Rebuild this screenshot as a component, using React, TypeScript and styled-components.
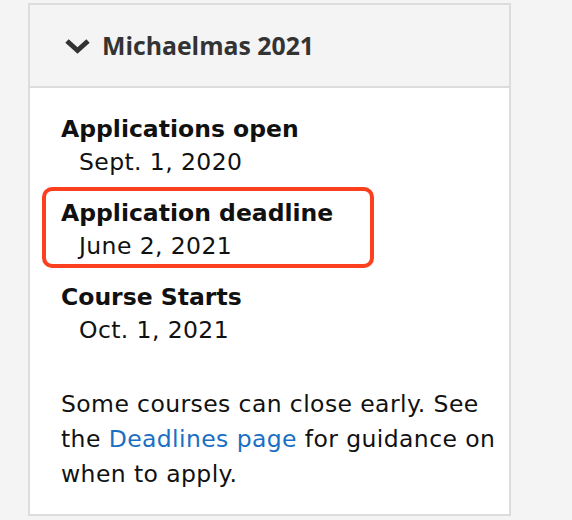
import React from "react"
import styled, { createGlobalStyle } from "styled-components"

const GlobalStyle = createGlobalStyle`
  body {
    margin: 0;
    background: #f4f4f4;
  }
`

const Page = styled.div`
  padding: 3px 0 0 28px;
`

const Card = styled.section`
  width: 479px;
  border: 2px solid #dcdcdc;
  background: #fff;
`

const Header = styled.div`
  height: 81px;
  display: flex;
  align-items: center;
  gap: 11px;
  padding-left: 34px;
  background: #f4f4f4;
  border-bottom: 2px solid #dcdcdc;
`

const Title = styled.h2`
  margin: 0 0 2px;
  font-family: "Open Sans", sans-serif;
  font-weight: 700;
  font-size: 24.8px;
  color: #333;
`

const Body = styled.div`
  padding: 25px 10px 22px 31px;
  font-family: "DejaVu Sans", Verdana, sans-serif;
  font-size: 23.5px;
  letter-spacing: 0.4px;
  color: #111;
`

const Dates = styled.dl`
  margin: 0 0 40px;
`

const Group = styled.div<{ $highlight?: boolean }>`
  position: relative;
  margin-bottom: 18px;
  &:last-child {
    margin-bottom: 0;
  }
  ${(p) =>
    p.$highlight &&
    `
    &::after {
      content: "";
      position: absolute;
      left: -19px;
      top: -10px;
      width: 332px;
      height: 81px;
      box-sizing: border-box;
      border: 4px solid #fc3f1f;
      border-radius: 10px;
    }
  `}
`

const Term = styled.dt`
  font-weight: 700;
  letter-spacing: 0;
  line-height: 33px;
`

const Value = styled.dd`
  margin: 0 0 0 18px;
  line-height: 33px;
`

const Note = styled.p`
  margin: 0;
  line-height: 35px;
  a {
    color: #1a6fc4;
    text-decoration: none;
  }
`

const Chevron = () => (
  <svg width="27" height="16" viewBox="0 0 27 16">
    <path d="M3 3 L13.5 12.5 L24 3" fill="none" stroke="#333" strokeWidth="5" />
  </svg>
)

const dates = [
  { term: "Applications open", value: "Sept. 1, 2020" },
  { term: "Application deadline", value: "June 2, 2021", highlight: true },
  { term: "Course Starts", value: "Oct. 1, 2021" },
]

export default function App() {
  return (
    <Page>
      <GlobalStyle />
      <Card>
        <Header>
          <Chevron />
          <Title>Michaelmas 2021</Title>
        </Header>
        <Body>
          <Dates>
            {dates.map((d) => (
              <Group key={d.term} $highlight={d.highlight}>
                <Term>{d.term}</Term>
                <Value>{d.value}</Value>
              </Group>
            ))}
          </Dates>
          <Note>
            Some courses can close early. See the <a href="#">Deadlines page</a> for
            guidance on when to apply.
          </Note>
        </Body>
      </Card>
    </Page>
  )
}
